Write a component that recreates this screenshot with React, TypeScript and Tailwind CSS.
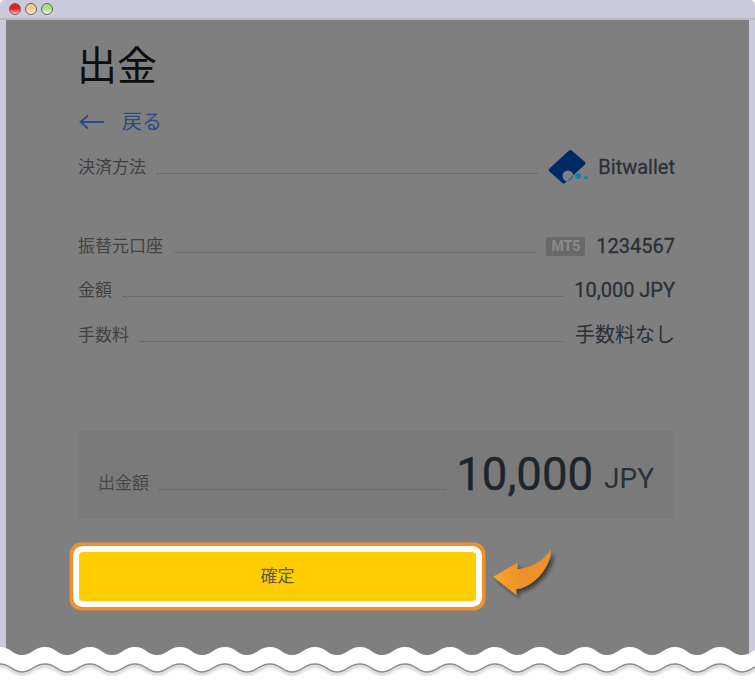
const waveTop = (y: number) => {
  let d = `M-23 ${y + 8}`;
  for (let x = -23; x < 780; x += 45) {
    d += ` C${x + 10} ${y + 8} ${x + 12} ${y} ${x + 23} ${y} S${x + 35} ${y + 8} ${x + 45} ${y + 8}`;
  }
  return d;
};

function Row({ label, children, className = "" }: { label: string; children: React.ReactNode; className?: string }) {
  return (
    <div className={`flex items-center ${className}`}>
      <span className="-ml-px text-[17px] text-[#424242] leading-[22px]">{label}</span>
      <span className="flex-1 mx-[11px] mt-[12px] border-b border-dotted border-[#5e5e5e]" />
      {children}
    </div>
  );
}

function Light({ from, to }: { from: string; to: string }) {
  return (
    <span
      className="w-3 h-3 rounded-full border border-[#666]"
      style={{ background: `linear-gradient(${from} 45%, ${to})` }}
    />
  );
}

export default function App() {
  return (
    <div className="relative w-[755px] h-[680px] overflow-hidden bg-white font-['Roboto','Noto_Sans_CJK_JP',sans-serif]">
      <div className="flex flex-col h-full bg-[#cbcbdb] rounded-t-[5px]">
        {/* window bar */}
        <div className="h-[20px] flex items-center gap-1 pl-[9px] border-b-2 border-[#b9b9bb] shrink-0">
          <Light from="#ee1c1c" to="#ffc0c0" />
          <Light from="#f8c98a" to="#fff0d8" />
          <Light from="#a8e08a" to="#eaffe0" />
        </div>

        <div className="flex-1 mx-[6px] bg-[#7f7f7f] pl-[73px] pr-[74px] pt-[22px]">
          <h1 className="-ml-[2px] text-[40px] leading-[50px] text-[#0d0d0d]">出金</h1>

          <div className="flex items-center mt-[17px] h-[26px] text-[#2c4a86]">
            <svg width="26" height="16" viewBox="0 0 26 16" fill="none" stroke="currentColor" strokeWidth="1.8">
              <path d="M25 8H2M9 1.500 1.500 8 9 14.500" />
            </svg>
            <span className="ml-[17px] text-[20px] leading-[26px]">戻る</span>
          </div>

          <Row label="決済方法" className="mt-[16px] h-[32px]">
            <svg width="42" height="36" viewBox="0 0 42 36" className="-mt-[1px]">
              <path d="M1 20 21 1.500a2 2 0 0 1 2.600 0L37 13a2 2 0 0 1 0 2.600L17 34a2 2 0 0 1-2.600 0L1 22a1.500 1.500 0 0 1 0-2Z" fill="#002a66" />
              <circle cx="20" cy="27" r="5.500" fill="#7f7f7f" />
              <path d="M19 31c2-.5 4-2.500 5-5l1.500 1c-1 2.500-3 4.500-5 5Z" fill="#1d7f9f" />
              <circle cx="30" cy="27" r="3" fill="#1d7f9f" />
              <circle cx="38" cy="28.500" r="2" fill="#1d7f9f" />
            </svg>
            <span className="ml-[8px] text-[20px] leading-[24px] text-[#2a3038] [-webkit-text-stroke:0.3px_#2a3038]">Bitwallet</span>
          </Row>

          <Row label="振替元口座" className="mt-[47px] h-[32px]">
            <span className="w-[39px] h-[19px] mr-[11px] rounded-[2px] bg-[#696969] text-[#8c8c8c] text-[14px] font-bold leading-[19px] text-center">MT5</span>
            <span className="text-[20px] leading-[24px] text-[#2a3038] [-webkit-text-stroke:0.3px_#2a3038]">1234567</span>
          </Row>

          <Row label="金額" className="mt-[12px] h-[32px]">
            <span className="text-[20px] leading-[24px] text-[#2a3038] [-webkit-text-stroke:0.3px_#2a3038]">10,000 JPY</span>
          </Row>

          <Row label="手数料" className="mt-[13px] h-[32px]">
            <span className="text-[20px] leading-[24px] text-[#2a3038]">手数料なし</span>
          </Row>

          <div className="mt-[80px] h-[88px] w-[595px] bg-[#7a7a7a] flex items-center pl-[20px] pr-[20px]">
            <span className="-ml-px mt-[15px] text-[17px] leading-[22px] text-[#474747]">出金額</span>
            <span className="flex-1 mx-[10px] mt-[28px] border-b border-dotted border-[#5e5e5e]" />
            <span className="text-[45.500px] leading-[60px] text-[#1e252d] [-webkit-text-stroke:0.4px_#1e252d]">10,000</span>
            <span className="text-[28px] leading-[40px] mt-[8px] ml-[11px] text-[#2a3038]">JPY</span>
          </div>

          <button className="block mt-[33px] w-[397px] h-[49px] rounded-[4px] bg-[#ffcd00] text-[17px] text-[#5a5a4a] shadow-[0_0_0_6px_#ffffff,0_0_0_9.500px_#f0902c]">
            確定
          </button>
        </div>
      </div>

      {/* callout arrow */}
      <svg className="absolute left-[485px] top-[540px]" width="80" height="70" viewBox="0 0 80 70">
        <defs>
          <linearGradient id="arrowFill" x1="0" x2="1" y1="0" y2="0">
            <stop offset="0" stopColor="#f4a826" />
            <stop offset="0.5" stopColor="#ef9029" />
            <stop offset="1" stopColor="#ef9029" />
          </linearGradient>
          <filter id="arrowShadow" x="-20%" y="-20%" width="150%" height="150%">
            <feDropShadow dx="3" dy="3" stdDeviation="2" floodColor="#000" floodOpacity="0.55" />
          </filter>
        </defs>
        <path
          d="M8.300 36.700 32.700 22.700 32.300 29.300C47 28 60 20 65.700 9.300 67 25 50 47 31 49.300L31.700 55.300Z"
          fill="url(#arrowFill)"
          filter="url(#arrowShadow)"
        />
      </svg>

      {/* torn edge */}
      <svg className="absolute left-0 bottom-0" width="755" height="40" viewBox="0 640 755 40">
        <defs>
          <filter id="edgeShadow" x="0" y="-50%" width="100%" height="200%">
            <feDropShadow dx="0" dy="2" stdDeviation="1.500" floodColor="#000" floodOpacity="0.35" />
          </filter>
        </defs>
        <path d={`${waveTop(647)} L780 680 L-23 680 Z`} fill="#ffffff" />
        <path d={waveTop(664)} fill="none" stroke="#8c8c8c" strokeWidth="1.500" filter="url(#edgeShadow)" />
      </svg>
    </div>
  );
}
